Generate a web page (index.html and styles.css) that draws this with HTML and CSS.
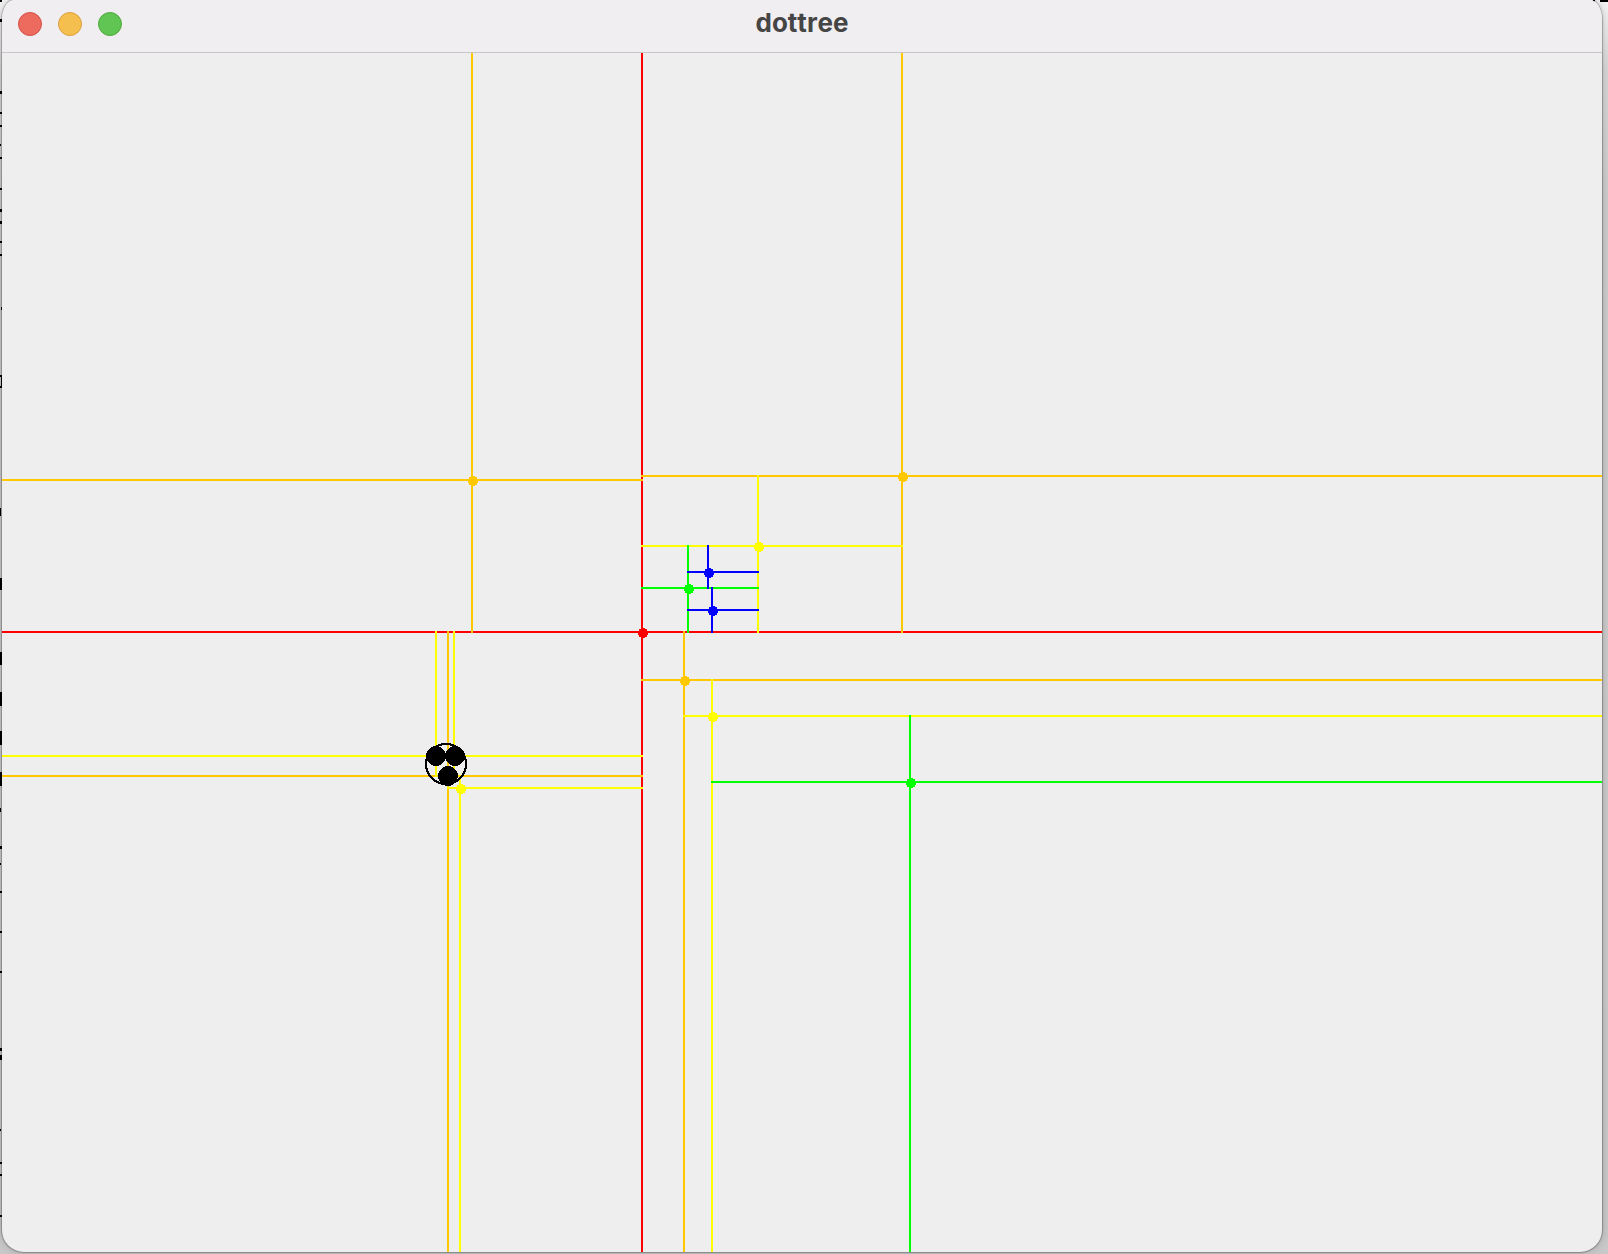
FILE: index.html
```html
<!DOCTYPE html>
<html lang="en">
<head>
<meta charset="utf-8">
<title>dottree</title>
<link rel="stylesheet" href="styles.css">
</head>
<body>
<svg class="backdrop" width="2" height="1254" aria-hidden="true">
  <path d="M0 0h2v2h-2zM0 19h2v3h-2zM0 91h2v3h-2zM0 112h2v2h-2zM0 125h2v2h-2zM0 144h1v2h-1zM0 157h2v2h-2zM0 188h2v2h-2zM0 209h2v3h-2zM0 221h2v3h-2zM0 241h2v2h-2zM0 254h2v2h-2zM1 307h1v3h-1zM0 375h2v2h-2zM1 377h1v9h-1zM0 386h2v2h-2zM0 508h1v8h-1zM0 578h2v12h-2zM0 652h2v13h-2zM0 692h2v14h-2zM0 731h2v14h-2zM0 772h2v14h-2zM0 808h1v4h-1zM0 846h2v3h-2zM0 863h1v2h-1zM0 891h2v2h-2zM0 931h2v2h-2zM0 971h2v2h-2zM0 1048h2v3h-2zM0 1055h2v5h-2zM0 1129h1v2h-1zM0 1162h2v2h-2zM0 1174h2v2h-2zM0 1215h2v2h-2z"/>
</svg>
<svg class="corner" width="18" height="6" aria-hidden="true">
  <path d="M3 0h2v3h-2zM10 0h8v2h-8z"/>
</svg>
<main class="window">
  <header class="titlebar">
    <div class="controls">
      <button class="control close" type="button" aria-label="Close"></button>
      <button class="control minimize" type="button" aria-label="Minimize"></button>
      <button class="control zoom" type="button" aria-label="Zoom"></button>
    </div>
    <h1 class="title">dottree</h1>
  </header>
  <svg class="tree" viewBox="2 53 1600 1199" role="img" aria-label="Point quadtree with a search circle">
    <g class="red"><path d="M642 53V1252M2 632H1602"/><circle cx="643" cy="633" r="5"/></g>
    <g class="orange">
      <path d="M472 53V633M2 480H643"/><circle cx="473" cy="481" r="5"/>
      <path d="M902 53V633M641 476H1602"/><circle cx="903" cy="477" r="5"/>
      <path d="M448 631V1252M2 776H643"/>
      <path d="M684 631V1252M641 680H1602"/><circle cx="685" cy="681" r="5"/>
    </g>
    <g class="yellow">
      <path d="M758 475V633M641 546H903"/><circle cx="759" cy="547" r="5"/>
      <path d="M436 631V777M2 756H449"/>
      <path d="M454 631V777M447 756H643"/>
      <path d="M460 775V1252M447 788H643"/><circle cx="461" cy="789" r="5"/>
      <path d="M712 679V1252M683 716H1602"/><circle cx="713" cy="717" r="5"/>
    </g>
    <g class="green">
      <path d="M688 545V633M641 588H759"/><circle cx="689" cy="589" r="5"/>
      <path d="M910 715V1252M711 782H1602"/><circle cx="911" cy="783" r="5"/>
    </g>
    <g class="blue">
      <path d="M708 545V589M687 572H759"/><circle cx="709" cy="573" r="5"/>
      <path d="M712 587V633M687 610H759"/><circle cx="713" cy="611" r="5"/>
    </g>
    <g class="found">
      <circle cx="436" cy="756" r="10"/>
      <circle cx="455" cy="756" r="10"/>
      <circle cx="448" cy="776" r="10"/>
      <circle class="range" cx="446" cy="764" r="20"/>
    </g>
  </svg>
</main>
</body>
</html>
```
FILE: styles.css
```css
* {
  box-sizing: border-box;
}

body {
  margin: 0;
  padding: 0 6px 2px 2px;
  background: linear-gradient(#f4f4f4, #d6d6d6 70px, #cccccc 200px, #c8c8c8);
}

.backdrop {
  position: absolute;
  left: 0;
  top: 0;
}

.corner {
  position: absolute;
  right: 0;
  top: 0;
}

.window {
  position: relative;
  overflow: hidden;
  background: #eeeeee;
  border-radius: 12px 12px 22px 22px / 20px 20px 22px 22px;
  box-shadow: 0 0 1px 1px rgba(0, 0, 0, 0.25), 0 0 8px rgba(0, 0, 0, 0.2);
}

.titlebar {
  display: grid;
  grid-template-columns: 1fr auto 1fr;
  align-items: center;
  height: 53px;
  padding: 0 16px 4px;
  background: #f1eef1;
  border-bottom: 1px solid #c9c6c9;
}

.controls {
  display: flex;
  gap: 16px;
}

.control {
  width: 24px;
  height: 24px;
  padding: 0;
  border: 1px solid;
  border-radius: 50%;
}

.close {
  background: #ed6a5e;
  border-color: #d15147;
}

.minimize {
  background: #f5bf4f;
  border-color: #d8a040;
}

.zoom {
  background: #61c554;
  border-color: #50a73e;
}

.title {
  margin: 0;
  padding-bottom: 2px;
  color: #454545;
  font: 700 26px/32px Inter, "Liberation Sans", sans-serif;
  font-kerning: none;
  font-variant-ligatures: none;
}

.tree {
  display: block;
  width: 100%;
  height: auto;
  shape-rendering: crispEdges;
}

.tree path {
  fill: none;
  stroke-width: 2;
}

.red {
  fill: #ff0000;
  stroke: #ff0000;
}

.orange {
  fill: #ffc800;
  stroke: #ffc800;
}

.yellow {
  fill: #ffff00;
  stroke: #ffff00;
}

.green {
  fill: #00ff00;
  stroke: #00ff00;
}

.blue {
  fill: #0000ff;
  stroke: #0000ff;
}

.tree circle {
  stroke: none;
}

.found {
  fill: #000000;
}

.tree .range {
  fill: none;
  stroke: #000000;
  stroke-width: 2;
}
```
